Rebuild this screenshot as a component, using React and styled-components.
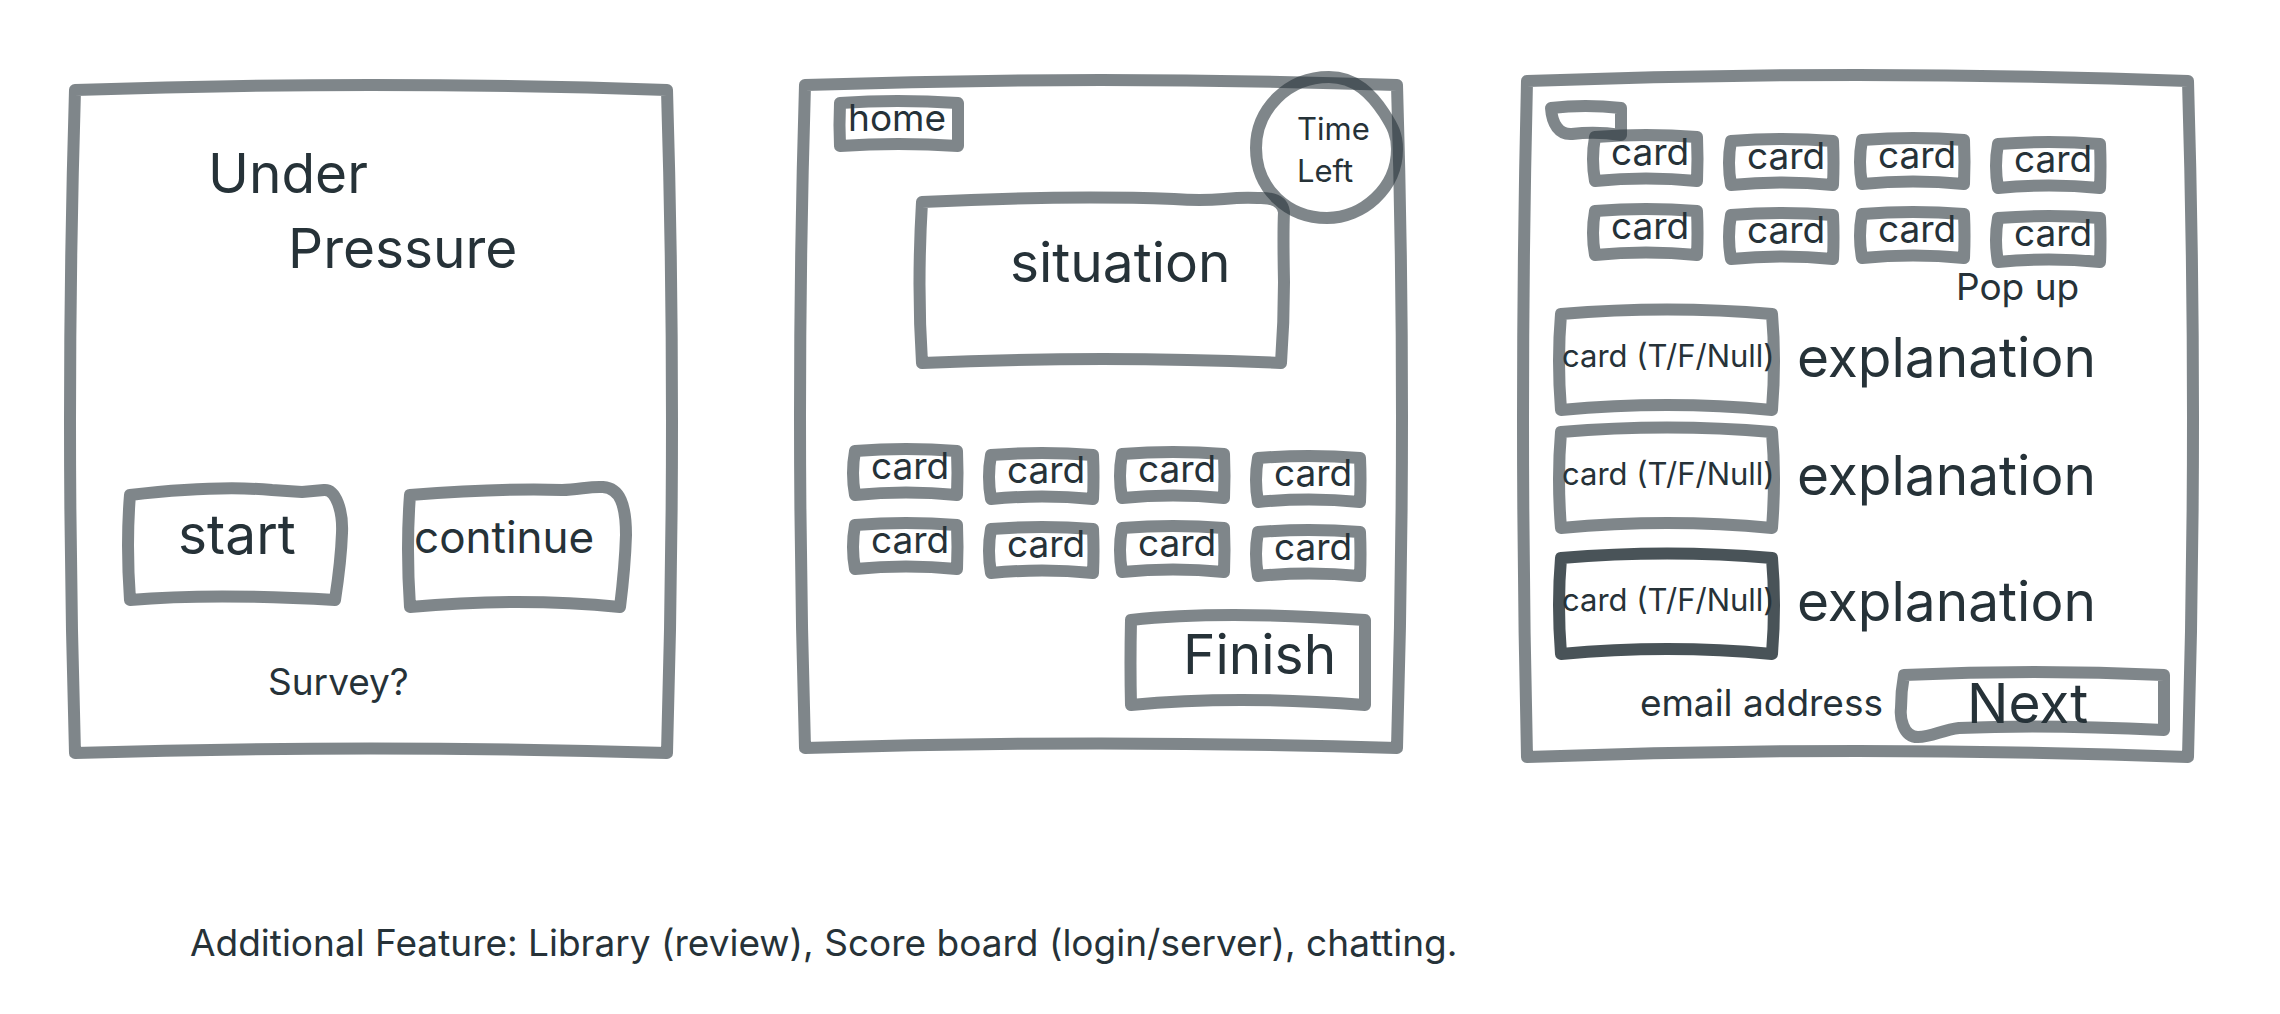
import React from 'react';
import styled, { createGlobalStyle, css } from 'styled-components';

const ink = '#263238';

const GlobalStyle = createGlobalStyle`
  *, *::before, *::after { box-sizing: border-box; }
  body {
    margin: 0;
    background: #fff;
    color: ${ink};
    font-family: Inter, "Liberation Sans", sans-serif;
  }
  h1, h2, p { margin: 0; font-weight: 400; }
`;

/* Text styles shared by the whole board */
const type = {
  display: css`font-size: 55px; line-height: 66px;`,
  large: css`font-size: 44px; line-height: 54px;`,
  body: css`font-size: 37px; line-height: 44px;`,
  small: css`font-size: 31px; line-height: 42px;`,
};

/* Hand-drawn outlines, each in the coordinates of its own box */
const outlines = {
  start: { w: 226, h: 125, d: 'M8 14 Q95 4 150 9 Q164 10 180 11 L202 9 C214 8 221 30 220 52 Q219 80 213 119 Q90 112 8 119 Q4 62 8 14 Z' },
  resume: { w: 230, h: 132, d: 'M8 14 Q100 7 160 9 C176 9 188 5 201 6 C218 7 224 24 224 54 Q223 86 218 126 Q118 116 8 126 Q4 66 8 14 Z' },
  home: { w: 130, h: 57, d: 'M6 8 Q62 4 124 8 V51 Q64 47 6 51 Q5 30 6 8 Z' },
  situation: { w: 376, h: 177, d: 'M8 10 Q150 3 260 7 Q286 9 310 7 Q330 5 344 6 Q368 5 370 20 Q369 40 370 90 Q370 130 367 171 Q190 163 8 171 Q3 94 8 10 Z' },
  card: { w: 116, h: 58, d: 'M7 8 Q58 4 109 8 Q110 30 109 52 Q58 47 7 52 Q3 30 7 8 Z' },
  finish: { w: 246, h: 102, d: 'M6 11 Q95 1 240 11 V96 Q110 86 6 96 Q5 56 6 11 Z' },
  tab: { w: 82, h: 40, d: 'M6 8 Q40 4 76 8 V35 Q51 31 27 34 C14 35 7 24 6 8 Z' },
  verdict: { w: 227, h: 112, d: 'M8 10 Q115 1 219 10 Q223 56 219 106 Q115 96 8 106 Q4 56 8 10 Z' },
  next: { w: 276, h: 77, d: 'M10 9 Q140 3 270 9 V64 Q150 58 65 62 C48 64 38 71 24 71 C8 71 6 50 7 42 Q7 25 10 9 Z' },
  timer: { w: 153, h: 153, d: 'M79 6 C106 6 122 24 134 42 C143 56 147 64 147 78 C147 118 112 147 77 147 C38 147 6 118 6 77 C6 38 38 6 79 6 Z' },
  screen: { w: 614, h: 680, d: 'M11 11 Q306 1 603 11 Q613 340 603 674 Q306 665 11 674 Q1 340 11 11 Z' },
  wideScreen: { w: 682, h: 694, d: 'M10 12 Q341 0 671 12 Q681 347 671 688 Q341 676 10 688 Q2 347 10 12 Z' },
};

const OutlineSvg = styled.svg`
  position: absolute;
  inset: 0;
  width: 100%;
  height: 100%;
  overflow: visible;
  pointer-events: none;
  fill: none;
  stroke: ${ink};
  stroke-opacity: ${(p) => (p.$strong ? 0.84 : 0.59)};
  stroke-width: 12px;
  stroke-linejoin: round;
`;

function Outline({ shape, strong }) {
  const { w, h, d } = outlines[shape];
  return (
    <OutlineSvg viewBox={`0 0 ${w} ${h}`} preserveAspectRatio="none" aria-hidden="true" $strong={strong}>
      <path d={d} vectorEffect="non-scaling-stroke" />
    </OutlineSvg>
  );
}

const Page = styled.main`
  padding: 69px 81px 48px 64px;
`;

const Board = styled.div`
  display: grid;
  grid-template-columns: 614fr 116fr 614fr 109fr 682fr;
  align-items: start;
`;

const Screen = styled.section`
  position: relative;
  display: flex;
  flex-direction: column;
  align-items: flex-start;
  grid-column: ${(p) => p.$column};
  margin-top: ${(p) => p.$drop}px;
  padding: ${(p) => p.$pad};
`;

const Title = styled.h1`
  padding-left: 144px;
  font-size: 55px;
  line-height: 75px;
`;

const TitleLine = styled.span`
  display: block;
  padding-left: ${(p) => (p.$indent ? 80 : 0)}px;
`;

const Choices = styled.div`
  display: flex;
  align-items: flex-start;
  gap: 54px;
  margin: 195px 0 0 58px;
`;

const ButtonBase = styled.button`
  position: relative;
  display: flex;
  flex: none;
  align-items: flex-start;
  width: ${(p) => p.$w}px;
  min-height: ${(p) => p.$h}px;
  padding: ${(p) => p.$pad};
  border: 0;
  background: none;
  color: inherit;
  font-family: inherit;
  text-align: left;
  white-space: nowrap;
  cursor: pointer;
  ${(p) => type[p.$type]}
`;

const Label = styled.span`
  position: relative;
`;

function SketchButton({ shape, type: size = 'body', pad = '0', strong, children, ...rest }) {
  const { w, h } = outlines[shape];
  return (
    <ButtonBase type="button" $w={w} $h={h} $pad={pad} $type={size} {...rest}>
      <Outline shape={shape} strong={strong} />
      {children && <Label>{children}</Label>}
    </ButtonBase>
  );
}

const SurveyLink = styled.a`
  margin: 47px 0 0 204px;
  color: inherit;
  text-decoration: none;
  ${type.body}
`;

const HomeSlot = styled.nav`
  padding-left: 40px;
`;

const Timer = styled.div`
  position: absolute;
  top: -3px;
  right: 5px;
  width: 153px;
  height: 153px;
  padding: 37px 0 0 47px;
  ${type.small}
`;

const TimerLine = styled.span`
  display: block;
`;

const Situation = styled.div`
  position: relative;
  width: 376px;
  min-height: 177px;
  margin: 40px 0 0 120px;
  padding: 37px 0 0 96px;
`;

const SituationText = styled.h2`
  ${type.display}
`;

/* Columns hang at slightly different heights, as in a quick sketch */
const CardGrid = styled.div`
  display: grid;
  grid-template-columns: 118px 113px 118px 116px;
  gap: 8px 18px;
  grid-auto-rows: 66px;
  align-items: start;
  margin: ${(p) => p.$margin};

  & > :nth-child(4n + 2) { margin-top: 4px; }
  & > :nth-child(4n + 3) { margin-top: 3px; }
  & > :nth-child(4n + 4) { margin-top: 7px; }
`;

function Cards({ margin }) {
  return (
    <CardGrid $margin={margin}>
      {Array.from({ length: 8 }, (_, i) => (
        <SketchButton key={i} shape="card" pad="1px 0 0 23px">card</SketchButton>
      ))}
    </CardGrid>
  );
}

const FinishSlot = styled.div`
  align-self: flex-end;
  margin: 26px 37px 0 0;
`;

const TabSlot = styled.div`
  position: absolute;
  top: 31px;
  left: 28px;
`;

const PopUp = styled.p`
  margin: 1px 0 0 439px;
  font-size: 37px;
  line-height: 34px;
`;

const Result = styled.div`
  display: flex;
  align-items: flex-start;
  gap: 17px;
  margin: ${(p) => p.$gap}px 0 0 36px;
`;

const Explanation = styled.p`
  padding-top: 20px;
  ${type.display}
`;

const Footer = styled.div`
  display: flex;
  align-items: flex-start;
  align-self: flex-end;
  gap: 11px;
  margin: 6px 29px 0 0;
`;

const Email = styled.p`
  padding-top: 15px;
  ${type.body}
`;

const Note = styled.p`
  margin: 158px 0 0 126px;
  ${type.body}
`;

const results = [
  { gap: 0 },
  { gap: 6 },
  { gap: 14, strong: true },
];

export default function App() {
  return (
    <>
      <GlobalStyle />
      <Page>
        <Board>
          <Screen $column={1} $drop={10} $pad="57px 0 55px">
            <Outline shape="screen" />
            <Title>
              <TitleLine>Under</TitleLine>
              <TitleLine $indent>Pressure</TitleLine>
            </Title>
            <Choices>
              <SketchButton shape="start" type="display" pad="20px 0 0 56px">start</SketchButton>
              <SketchButton shape="resume" type="large" pad="29px 0 0 12px">continue</SketchButton>
            </Choices>
            <SurveyLink href="#survey">Survey?</SurveyLink>
          </Screen>

          <Screen $column={3} $drop={5} $pad="21px 0 43px">
            <Outline shape="screen" />
            <HomeSlot>
              <SketchButton shape="home" pad="1px 0 0 14px">home</SketchButton>
            </HomeSlot>
            <Situation>
              <Outline shape="situation" />
              <SituationText>situation</SituationText>
            </Situation>
            <Cards margin="74px 0 0 54px" />
            <FinishSlot>
              <SketchButton shape="finish" type="display" pad="12px 0 0 58px">Finish</SketchButton>
            </FinishSlot>
            <Timer>
              <Outline shape="timer" />
              <TimerLine>Time</TimerLine>
              <TimerLine>Left</TimerLine>
            </Timer>
          </Screen>

          <Screen $column={5} $drop={0} $pad="60px 0 20px">
            <Outline shape="wideScreen" />
            <TabSlot>
              <SketchButton shape="tab" aria-label="home" />
            </TabSlot>
            <Cards margin="0 0 0 71px" />
            <PopUp>Pop up</PopUp>
            {results.map(({ gap, strong }, i) => (
              <Result key={i} $gap={gap}>
                <SketchButton shape="verdict" type="small" pad="31px 0 0 9px" strong={strong}>
                  card (T/F/Null)
                </SketchButton>
                <Explanation>explanation</Explanation>
              </Result>
            ))}
            <Footer>
              <Email>email address</Email>
              <SketchButton shape="next" type="display" pad="4px 0 0 73px">Next</SketchButton>
            </Footer>
          </Screen>
        </Board>
        <Note>Additional Feature: Library (review), Score board (login/server), chatting.</Note>
      </Page>
    </>
  );
}
